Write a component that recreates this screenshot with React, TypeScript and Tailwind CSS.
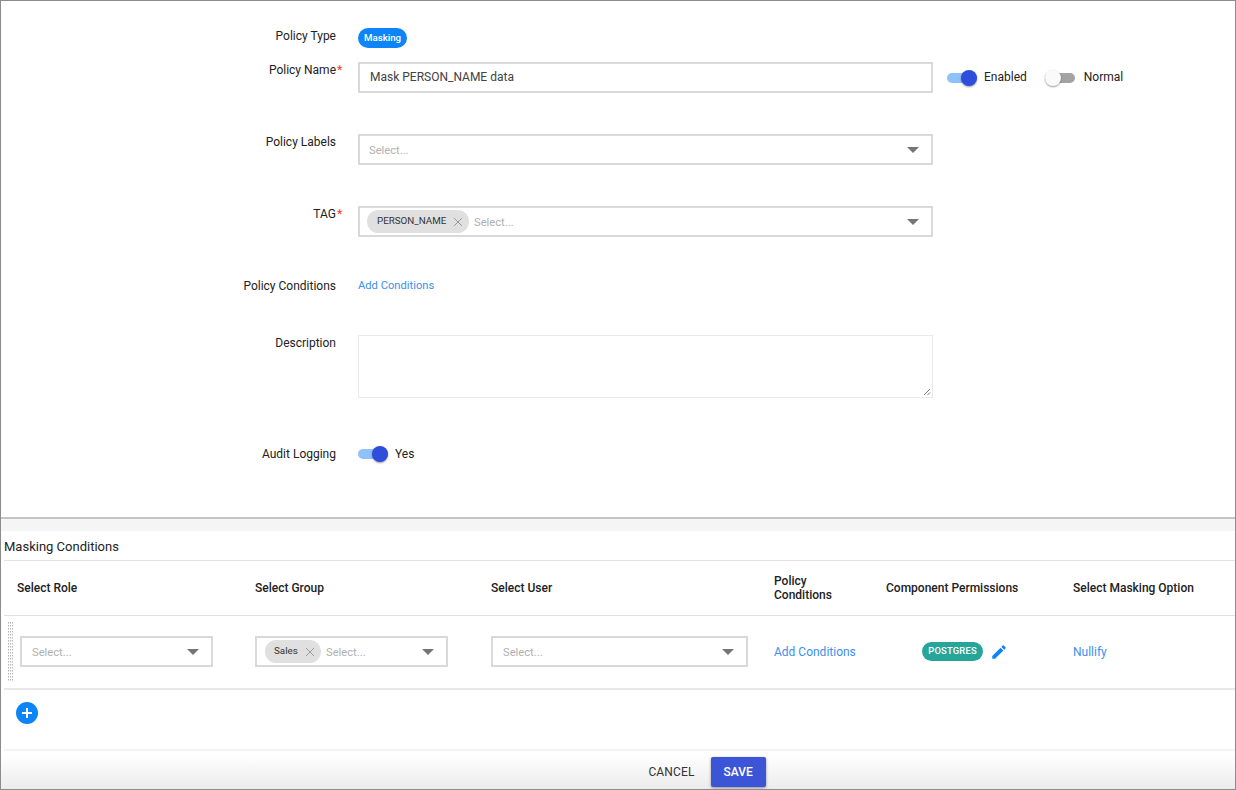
import type { ReactNode } from "react"

const rowGrid = "grid grid-cols-[251px_236px_283px_112px_187px_1fr]"

function Caret() {
  return (
    <svg width="12" height="6" viewBox="0 0 12 6" className="mt-px shrink-0">
      <path d="M0 0h12L6 6z" fill="#757575" />
    </svg>
  )
}

function Chip({ label, className }: { label: string; className: string }) {
  return (
    <span className={`flex h-[23px] shrink-0 items-center rounded-full bg-[#e0e0e0] text-[9.8px] text-[#333] ${className}`}>
      {label}
      <svg width="10" height="10" viewBox="0 0 10 10" className="ml-[7px]">
        <path d="M1 1l8 8M9 1l-8 8" stroke="#9a9a9a" strokeWidth="1" fill="none" />
      </svg>
    </span>
  )
}

function SelectBox({ className, padding, chip }: { className: string; padding: string; chip?: ReactNode }) {
  return (
    <div className={`flex h-[31px] items-center border-2 border-[#d9d9d9] bg-white ${padding} ${className}`}>
      {chip}
      <span className="flex-1 pt-[3px] text-[11.2px] text-[#b0b0b0]">Select...</span>
      <Caret />
    </div>
  )
}

function Toggle({ on }: { on: boolean }) {
  return (
    <span className="relative block h-[16px] w-[30px] shrink-0">
      <span className={`absolute inset-x-0 top-[3px] h-[10px] rounded-full ${on ? "bg-[#8fc1fb]" : "bg-[#a3a3a3]"}`} />
      <span
        className={`absolute top-0 size-[16px] rounded-full shadow-[0_1px_2px_rgba(0,0,0,0.4)] ${
          on ? "right-0 bg-[#2f4ddb]" : "left-0 bg-[#fafafa]"
        }`}
      />
    </span>
  )
}

function FormRow({
  label,
  required,
  height,
  children,
}: {
  label: string
  required?: boolean
  height: string
  children: ReactNode
}) {
  return (
    <div className={`flex ${height}`}>
      <div className="w-[335px] shrink-0 text-right text-[12px] leading-[16px] text-[#222]">
        <span className="relative">
          {label}
          {required && <span className="absolute left-full top-[-1px] ml-[1px] text-[12.5px] text-[#f0431e]">*</span>}
        </span>
      </div>
      <div className="ml-[22px] flex flex-1">{children}</div>
    </div>
  )
}

export default function App() {
  return (
    <div
      className="flex h-[790px] w-[1236px] flex-col overflow-hidden border border-[#8c8c8c] bg-white"
      style={{ fontFamily: "Roboto, sans-serif" }}
    >
      {/* Policy form */}
      <div className="h-[516px] shrink-0 pt-[27px]">
        <FormRow label="Policy Type" height="h-[34px]">
          <span className="flex h-[20px] w-[49px] items-center justify-center rounded-full bg-[#0d84f7] text-[9.7px] font-medium text-white">
            Masking
          </span>
        </FormRow>
        <FormRow label="Policy Name" required height="h-[72px]">
          <div className="flex h-[31px] w-[575px] items-center border-2 border-[#d9d9d9] pb-px pl-[10px] text-[12px] text-[#424242]">
            Mask PERSON_NAME data
          </div>
          <div className="ml-[14px] flex h-[31px] items-center text-[12px] text-[#222]">
            <Toggle on />
            <span className="ml-[7px] pb-[2px]">Enabled</span>
            <span className="ml-[18px]">
              <Toggle on={false} />
            </span>
            <span className="ml-[9px] pb-[2px]">Normal</span>
          </div>
        </FormRow>
        <FormRow label="Policy Labels" height="h-[72px]">
          <SelectBox className="w-[575px]" padding="pl-[9px] pr-[12px]" />
        </FormRow>
        <FormRow label="TAG" required height="h-[72px]">
          <SelectBox
            className="w-[575px]"
            padding="pl-[7px] pr-[12px]"
            chip={<Chip label="PERSON_NAME" className="mr-[5px] w-[102px] pl-[10px]" />}
          />
        </FormRow>
        <FormRow label="Policy Conditions" height="h-[57px]">
          <span className="text-[11.2px] leading-[16px] text-[#3d8fee]">Add Conditions</span>
        </FormRow>
        <FormRow label="Description" height="h-[111px]">
          <div className="relative h-[63px] w-[575px] border border-[#e9e9e9]">
            <svg width="8" height="8" viewBox="0 0 8 8" className="absolute bottom-[1px] right-[1px]">
              <path d="M1 7l6-6M4.5 7L7 4.5" stroke="#666" strokeWidth="0.9" fill="none" />
            </svg>
          </div>
        </FormRow>
        <FormRow label="Audit Logging" height="h-[20px]">
          <div className="flex h-[16px] items-center text-[12px] text-[#222]">
            <Toggle on />
            <span className="ml-[7px] pb-[1px]">Yes</span>
          </div>
        </FormRow>
      </div>

      <div className="h-[2px] shrink-0 bg-[#c4c4c4]" />
      <div className="h-[12px] shrink-0 bg-[#f5f5f5]" />

      {/* Masking conditions */}
      <div className="pl-[3px]">
        <div className="flex h-[30px] items-center border-b border-[#e3e3e3] pt-[2px] text-[13px] text-[#222]">
          Masking Conditions
        </div>
        <div className={`${rowGrid} h-[55px] items-center border-b border-[#e0e0e0] text-[12px] font-medium leading-[14px] text-[#222]`}>
          <div className="pl-[13px]">Select Role</div>
          <div>Select Group</div>
          <div>Select User</div>
          <div className="w-[70px]">Policy Conditions</div>
          <div>Component Permissions</div>
          <div>Select Masking Option</div>
        </div>
        <div className={`${rowGrid} h-[74px] items-center border-b-2 border-[#e8e8e8] pb-px`}>
          <div className="flex items-center">
            <svg width="5" height="59" className="ml-[4px] mr-[7px] shrink-0">
              {Array.from({ length: 20 }).flatMap((_, r) =>
                [0, 2, 4].map((x) => <rect key={`${r}-${x}`} x={x} y={r * 3} width="1" height="1.5" fill="#b4b4b4" />),
              )}
            </svg>
            <SelectBox className="w-[193px]" padding="pl-[10px] pr-[12px]" />
          </div>
          <div>
            <SelectBox
              className="w-[193px]"
              padding="pl-[8px] pr-[12px]"
              chip={<Chip label="Sales" className="mr-[5px] w-[56px] pl-[9px]" />}
            />
          </div>
          <div>
            <SelectBox className="w-[257px]" padding="pl-[10px] pr-[12px]" />
          </div>
          <div className="text-[12px] text-[#3d8fee]">Add Conditions</div>
          <div className="flex items-center pl-[36px]">
            <span className="flex h-[19px] w-[61px] items-center justify-center rounded-full bg-[#26a69a] text-[9.4px] font-medium tracking-[0.2px] text-white">
              POSTGRES
            </span>
            <svg width="18" height="18" viewBox="0 0 24 24" className="ml-[7px]" fill="#0d84f7">
              <path d="M3 17.25V21h3.75L17.81 9.94l-3.75-3.75L3 17.25zM20.71 7.04a1 1 0 0 0 0-1.41l-2.34-2.34a1 1 0 0 0-1.41 0l-1.83 1.83 3.75 3.75 1.83-1.83z" />
            </svg>
          </div>
          <div className="text-[12px] text-[#3d8fee]">Nullify</div>
        </div>
        <div className="h-[61px] border-b-2 border-[#f3f3f3] pl-[12px] pt-[12px]">
          <span className="flex size-[22px] items-center justify-center rounded-full bg-[#0d84f7]">
            <svg width="12" height="12" viewBox="0 0 12 12">
              <path d="M6 1v10M1 6h10" stroke="#fff" strokeWidth="2" fill="none" />
            </svg>
          </span>
        </div>
      </div>

      {/* Footer */}
      <div className="mt-[3px] flex flex-1 items-center justify-center bg-gradient-to-b from-white to-[#ececec] pl-[178px]">
        <span className="mr-[16px] text-[12px] tracking-[0.15px] text-[#333]">CANCEL</span>
        <span className="flex h-[30px] w-[55px] items-center justify-center rounded-[2px] bg-[#3b55d6] text-[12px] font-medium text-white shadow-[0_1px_3px_rgba(0,0,0,0.4)]">
          SAVE
        </span>
      </div>
    </div>
  )
}
